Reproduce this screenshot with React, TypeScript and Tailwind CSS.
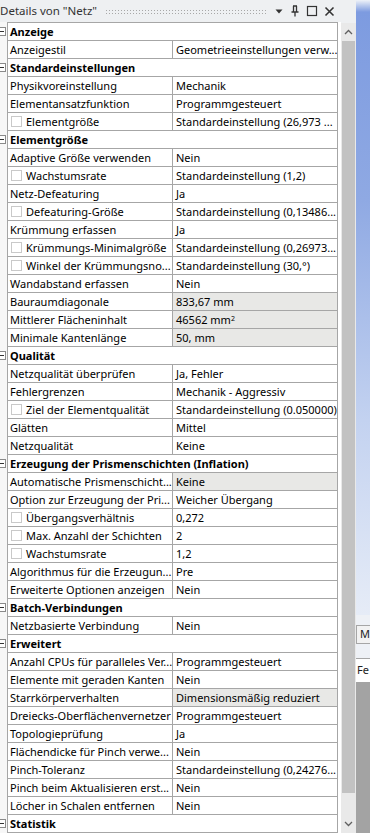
import React from "react";

type Row =
  | { kind: "cat"; label: string }
  | { kind: "prop"; label: string; value: React.ReactNode; check?: boolean; ro?: boolean };

const rows: Row[] = [
  { kind: "cat", label: "Anzeige" },
  { kind: "prop", label: "Anzeigestil", value: "Geometrieeinstellungen verw..." },
  { kind: "cat", label: "Standardeinstellungen" },
  { kind: "prop", label: "Physikvoreinstellung", value: "Mechanik" },
  { kind: "prop", label: "Elementansatzfunktion", value: "Programmgesteuert" },
  { kind: "prop", label: "Elementgröße", value: "Standardeinstellung (26,973 ...", check: true },
  { kind: "cat", label: "Elementgröße" },
  { kind: "prop", label: "Adaptive Größe verwenden", value: "Nein" },
  { kind: "prop", label: "Wachstumsrate", value: "Standardeinstellung (1,2)", check: true },
  { kind: "prop", label: "Netz-Defeaturing", value: "Ja" },
  { kind: "prop", label: "Defeaturing-Größe", value: "Standardeinstellung (0,13486...", check: true },
  { kind: "prop", label: "Krümmung erfassen", value: "Ja" },
  { kind: "prop", label: "Krümmungs-Minimalgröße", value: "Standardeinstellung (0,26973...", check: true },
  { kind: "prop", label: "Winkel der Krümmungsno...", value: "Standardeinstellung (30,°)", check: true },
  { kind: "prop", label: "Wandabstand erfassen", value: "Nein" },
  { kind: "prop", label: "Bauraumdiagonale", value: "833,67 mm", ro: true },
  {
    kind: "prop",
    label: "Mittlerer Flächeninhalt",
    value: (
      <>
        46562 mm<sup className="text-[7px]">2</sup>
      </>
    ),
    ro: true,
  },
  { kind: "prop", label: "Minimale Kantenlänge", value: "50, mm", ro: true },
  { kind: "cat", label: "Qualität" },
  { kind: "prop", label: "Netzqualität überprüfen", value: "Ja, Fehler" },
  { kind: "prop", label: "Fehlergrenzen", value: "Mechanik - Aggressiv" },
  { kind: "prop", label: "Ziel der Elementqualität", value: "Standardeinstellung (0.050000)", check: true },
  { kind: "prop", label: "Glätten", value: "Mittel" },
  { kind: "prop", label: "Netzqualität", value: "Keine" },
  { kind: "cat", label: "Erzeugung der Prismenschichten (Inflation)" },
  { kind: "prop", label: "Automatische Prismenschicht...", value: "Keine", ro: true },
  { kind: "prop", label: "Option zur Erzeugung der Pri...", value: "Weicher Übergang" },
  { kind: "prop", label: "Übergangsverhältnis", value: "0,272", check: true },
  { kind: "prop", label: "Max. Anzahl der Schichten", value: "2", check: true },
  { kind: "prop", label: "Wachstumsrate", value: "1,2", check: true },
  { kind: "prop", label: "Algorithmus für die Erzeugun...", value: "Pre" },
  { kind: "prop", label: "Erweiterte Optionen anzeigen", value: "Nein" },
  { kind: "cat", label: "Batch-Verbindungen" },
  { kind: "prop", label: "Netzbasierte Verbindung", value: "Nein" },
  { kind: "cat", label: "Erweitert" },
  { kind: "prop", label: "Anzahl CPUs für paralleles Ver...", value: "Programmgesteuert" },
  { kind: "prop", label: "Elemente mit geraden Kanten", value: "Nein" },
  { kind: "prop", label: "Starrkörperverhalten", value: "Dimensionsmäßig reduziert", ro: true },
  { kind: "prop", label: "Dreiecks-Oberflächenvernetzer", value: "Programmgesteuert" },
  { kind: "prop", label: "Topologieprüfung", value: "Ja" },
  { kind: "prop", label: "Flächendicke für Pinch verwe...", value: "Nein" },
  { kind: "prop", label: "Pinch-Toleranz", value: "Standardeinstellung (0,24276..." },
  { kind: "prop", label: "Pinch beim Aktualisieren erst...", value: "Nein" },
  { kind: "prop", label: "Löcher in Schalen entfernen", value: "Nein" },
  { kind: "cat", label: "Statistik" },
];

function CollapseBox() {
  return (
    <div className="absolute left-[-3px] top-[4px] flex h-[9px] w-[9px] items-center justify-center border border-[#8a8a8a] bg-white">
      <div className="h-px w-[5px] bg-[#333]" />
    </div>
  );
}

function TitleBar() {
  return (
    <div className="flex h-[23px] items-center bg-[#eef0f2] pr-[6px] text-[#333]">
      <span className="whitespace-nowrap text-[11.5px] leading-none">Details von "Netz"</span>
      <div className="ml-[8px] mr-[6px] h-[5px] flex-1 bg-[radial-gradient(#a8a8a8_0.8px,transparent_0.9px)] bg-[length:3px_3px]" />
      <div className="flex items-center gap-[6px]">
        <svg width="10" height="10" viewBox="0 0 10 10">
          <path d="M1.5 3.5h7L5 7.5z" fill="#333" />
        </svg>
        <svg width="10" height="12" viewBox="0 0 10 12">
          <path d="M3 1h4M3.5 1v6M6.5 1v6M1.5 7h7M5 7v4.5" stroke="#333" strokeWidth="1.3" fill="none" />
        </svg>
        <svg width="12" height="12" viewBox="0 0 12 12">
          <rect x="1.5" y="1.5" width="9" height="9" stroke="#333" strokeWidth="1.2" fill="none" />
        </svg>
        <svg width="11" height="11" viewBox="0 0 11 11">
          <path d="M1.5 1.5l8 8M9.5 1.5l-8 8" stroke="#333" strokeWidth="1.6" />
        </svg>
      </div>
    </div>
  );
}

function Scrollbar() {
  return (
    <div className="flex w-[15px] flex-col bg-[#e9e9e9]">
      <div className="flex h-[18px] items-center justify-center">
        <svg width="9" height="6" viewBox="0 0 9 6">
          <path d="M1 5l3.5-3.5L8 5" stroke="#606060" strokeWidth="1.3" fill="none" />
        </svg>
      </div>
      <div className="mx-[1px] h-[752px] bg-[#c2c2c2]" />
      <div className="flex-1" />
      <div className="flex h-[18px] items-center justify-center">
        <svg width="9" height="6" viewBox="0 0 9 6">
          <path d="M1 1l3.5 3.5L8 1" stroke="#606060" strokeWidth="1.3" fill="none" />
        </svg>
      </div>
    </div>
  );
}

function SidePanel() {
  return (
    <div className="flex flex-1 flex-col">
      <div className="h-[615px] bg-[linear-gradient(180deg,#eef2f8_0px,#7d9be0_12px,#8fa9e3_200px,#c3d2f0_420px,#e6ecf7_615px)]" />
      <div className="h-[10px] bg-[#eef1f6]" />
      <div className="flex h-[19px] items-center border border-r-0 border-[#a6a6a6] bg-[#f2f2f2] pl-[3px] text-[11px] text-[#222]">M</div>
      <div className="h-[14px] bg-[#eef1f6]" />
      <div className="flex h-[24px] items-center border-t border-[#a6a6a6] bg-white pl-[1px] text-[11px] text-[#222]">Fe</div>
      <div className="flex-1 bg-[#a3a3a3]" />
    </div>
  );
}

export default function App() {
  return (
    <div className="flex h-[833px] w-[370px] overflow-hidden bg-white font-['Noto_Sans','Open_Sans',sans-serif] text-[11px] text-black">
      <div className="flex w-[353px] flex-col">
        <TitleBar />
        <div className="flex flex-1">
          <div className="w-[7px] bg-[#f7f7f7]" />
          <div className="w-[331px] border-x border-t border-[#a6a6a6]">
            {rows.map((row, i) =>
              row.kind === "cat" ? (
                <div key={i} className="relative flex h-[18px] items-center border-b border-[#a6a6a6] bg-white">
                  <div className="absolute left-[-8px] top-0">
                    <CollapseBox />
                  </div>
                  <span className="whitespace-nowrap pl-[2px] font-bold leading-[17px]">{row.label}</span>
                </div>
              ) : (
                <div key={i} className="flex h-[18px] border-b border-[#a6a6a6]">
                  <div className="flex w-[165px] items-center gap-[4px] overflow-hidden whitespace-nowrap border-r border-[#a6a6a6] pl-[2px]">
                    {row.check ? <div className="ml-[1px] h-[11px] w-[11px] shrink-0 border border-[#c9c9c9] bg-white" /> : null}
                    <span className="leading-[17px]">{row.label}</span>
                  </div>
                  <div
                    className={
                      row.ro
                        ? "flex flex-1 items-center overflow-hidden whitespace-nowrap bg-[#e8e8e6] pl-[3px]"
                        : "flex flex-1 items-center overflow-hidden whitespace-nowrap pl-[3px]"
                    }
                  >
                    <span className="leading-[17px]">{row.value}</span>
                  </div>
                </div>
              )
            )}
          </div>
        </div>
      </div>
      <div className="flex flex-col">
        <div className="h-[23px] bg-[#eef0f2]" />
        <div className="flex flex-1">
          <Scrollbar />
        </div>
      </div>
      <SidePanel />
    </div>
  );
}
